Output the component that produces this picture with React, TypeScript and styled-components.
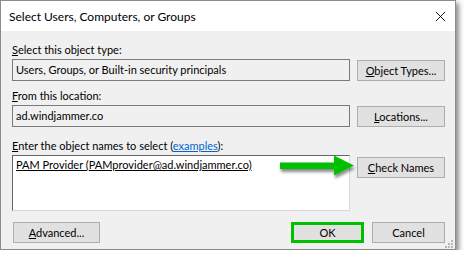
import React from 'react';
import styled, { createGlobalStyle } from 'styled-components';

const FONT = `Lato, "Liberation Sans", Arial, sans-serif`;

const GlobalStyle = createGlobalStyle`
  html, body {
    margin: 0;
    padding: 0;
    background: #fff;
  }
  body {
    font-family: ${FONT};
    font-size: 11px;
    color: #000;
  }
`;

const Key: React.FC<{ children: React.ReactNode }> = ({ children }) => <u>{children}</u>;

const App: React.FC = () => {
  return (
    <>
      <GlobalStyle />
      <Window>
        <TitleBar>
          <Title>Select Users, Computers, or Groups</Title>
          <CloseIcon viewBox="0 0 12 12">
            <path d="M1 1 L11 11 M11 1 L1 11" stroke="#000" strokeWidth="1" fill="none" />
          </CloseIcon>
        </TitleBar>
        <Body>
          <Section>
            <Label>
              <Key>S</Key>elect this object type:
            </Label>
            <Row>
              <ReadOnlyField>Users, Groups, or Built-in security principals</ReadOnlyField>
              <Button>
                <Key>O</Key>bject Types...
              </Button>
            </Row>
          </Section>
          <Section top={7}>
            <Label>
              <Key>F</Key>rom this location:
            </Label>
            <Row>
              <ReadOnlyField>ad.windjammer.co</ReadOnlyField>
              <Button>
                <Key>L</Key>ocations...
              </Button>
            </Row>
          </Section>
          <Section top={11}>
            <Label>
              <Key>E</Key>nter the object names to select (<Link>examples</Link>):
            </Label>
            <Row align="flex-start">
              <NamesBox>
                <ResolvedName>PAM Provider (PAMprovider@ad.windjammer.co)</ResolvedName>
                <Arrow viewBox="0 0 80 26">
                  <defs>
                    <filter id="sh" x="-10%" y="-30%" width="130%" height="180%">
                      <feGaussianBlur in="SourceAlpha" stdDeviation="1.5" />
                      <feOffset dx="1" dy="3" result="b" />
                      <feComponentTransfer>
                        <feFuncA type="linear" slope="0.45" />
                      </feComponentTransfer>
                      <feMerge>
                        <feMergeNode />
                        <feMergeNode in="SourceGraphic" />
                      </feMerge>
                    </filter>
                  </defs>
                  <path
                    d="M1 9.5 L55 9.5 L55 2.5 L75 12.5 L55 22.5 L55 16 L1 16 Z"
                    fill="#00c000"
                    filter="url(#sh)"
                  />
                </Arrow>
              </NamesBox>
              <Button offset={2}>
                <Key>C</Key>heck Names
              </Button>
            </Row>
          </Section>
          <Footer>
            <Button width={87}>
              <Key>A</Key>dvanced...
            </Button>
            <FooterRight>
              <Button width={73} highlight>
                OK
              </Button>
              <Button width={73}>Cancel</Button>
            </FooterRight>
          </Footer>
          <Grip viewBox="0 0 8 8">
            {[
              [6, 0],
              [6, 3],
              [3, 3],
              [6, 6],
              [3, 6],
              [0, 6],
            ].map(([x, y]) => (
              <rect key={`${x}-${y}`} x={x} y={y} width="2" height="2" fill="#b8b8b8" />
            ))}
          </Grip>
        </Body>
      </Window>
    </>
  );
};

export default App;

const Window = styled.div`
  position: relative;
  width: 454px;
  height: 248px;
  border: 1px solid #8c8c8c;
  background: #f0f0f0;
  box-shadow: 3px 3px 5px rgba(0, 0, 0, 0.45);
  display: flex;
  flex-direction: column;
`;

const TitleBar = styled.div`
  height: 30px;
  background: #fff;
  display: flex;
  align-items: center;
  justify-content: space-between;
  padding: 0 9px 0 8px;
`;

const Title = styled.div`
  font-size: 12px;
  color: #000;
`;

const CloseIcon = styled.svg`
  width: 11px;
  height: 11px;
`;

const Body = styled.div`
  position: relative;
  flex: 1;
  display: flex;
  flex-direction: column;
  padding: 11px 10px 0 11px;
`;

const Section = styled.div<{ top?: number }>`
  display: flex;
  flex-direction: column;
  gap: 2px;
  margin-top: ${({ top }) => top ?? 0}px;
`;

const Label = styled.div`
  height: 15px;
  line-height: 15px;
  font-size: 11px;
  white-space: nowrap;
`;

const Link = styled.span`
  color: #0066cc;
  text-decoration: underline;
`;

const Row = styled.div<{ align?: string }>`
  display: flex;
  align-items: ${({ align }) => align ?? 'center'};
  gap: 7px;
`;

const ReadOnlyField = styled.div`
  flex: 1;
  height: 20px;
  line-height: 20px;
  border: 1px solid #7a7a7a;
  background: #f0f0f0;
  padding: 0 3px;
  font-size: 11px;
  white-space: nowrap;
`;

const NamesBox = styled.div`
  position: relative;
  flex: 1;
  height: 52px;
  background: #fff;
  border-top: 1px solid #646464;
  border-left: 1px solid #646464;
  border-right: 1px solid #d8d8d8;
  border-bottom: 1px solid #d8d8d8;
  padding: 1px 3px;
`;

const ResolvedName = styled.div`
  font-size: 11px;
  line-height: 15px;
  text-decoration: underline;
  white-space: nowrap;
`;

const Arrow = styled.svg`
  position: absolute;
  left: 266px;
  top: -3px;
  width: 80px;
  height: 26px;
  overflow: visible;
`;

const Button = styled.button<{ width?: number; offset?: number; highlight?: boolean }>`
  flex: none;
  width: ${({ width }) => width ?? 88}px;
  height: 21px;
  margin-top: ${({ offset }) => offset ?? 0}px;
  padding: 0;
  background: #e1e1e1;
  border: ${({ highlight }) => (highlight ? '3px solid #00c000' : '1px solid #adadad')};
  font-family: ${FONT};
  font-size: 11px;
  color: #000;
  text-align: center;
  line-height: 1;
`;

const Footer = styled.div`
  display: flex;
  align-items: center;
  justify-content: space-between;
  margin-top: 11px;
  padding-left: 1px;
`;

const FooterRight = styled.div`
  display: flex;
  gap: 8px;
`;

const Grip = styled.svg`
  position: absolute;
  right: 2px;
  bottom: 1px;
  width: 8px;
  height: 8px;
`;
